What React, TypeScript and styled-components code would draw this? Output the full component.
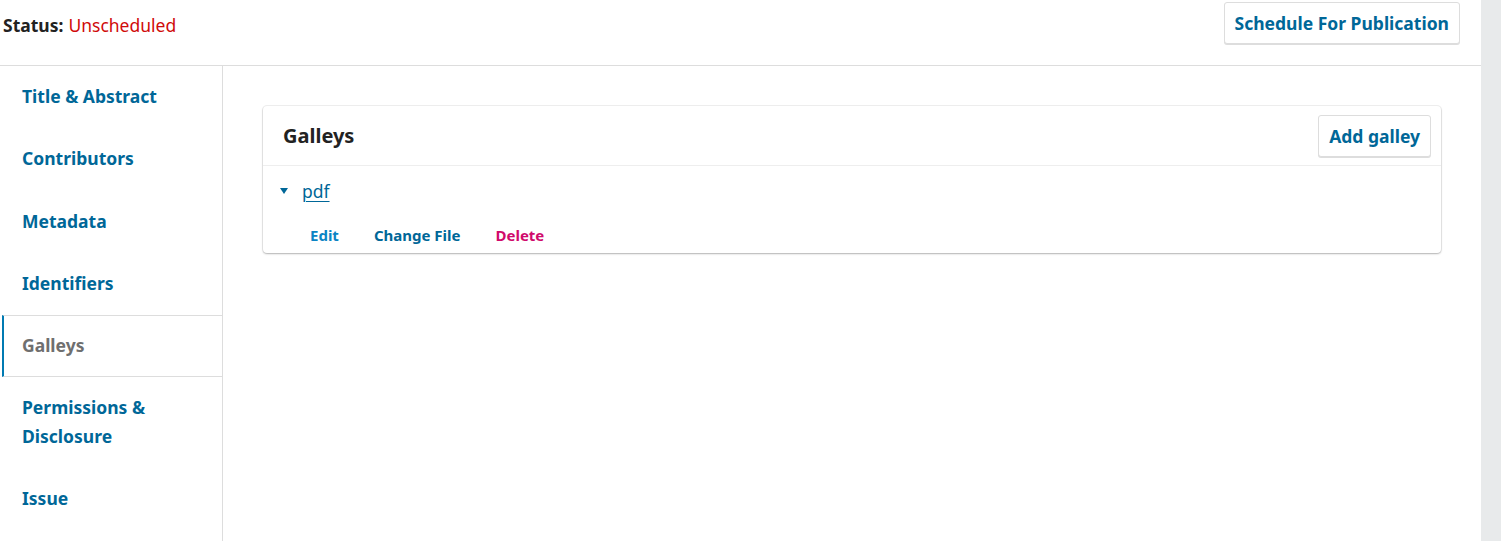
import React from "react";
import styled, { createGlobalStyle, css } from "styled-components";

const Global = createGlobalStyle`
  html, body { margin: 0; padding: 0; background: #fff; }
  body { font-family: "Noto Sans", "Open Sans", sans-serif; color: #222; }
  * { box-sizing: border-box; }
`;

const Page = styled.div`
  display: flex;
  width: 1501px;
  height: 541px;
  overflow: hidden;
`;

const Main = styled.div`
  width: 1481px;
  display: flex;
  flex-direction: column;
`;

const Scroll = styled.div`
  width: 20px;
  background: #e8eaeb;
`;

const Header = styled.div`
  height: 66px;
  display: flex;
  align-items: flex-start;
  justify-content: space-between;
  padding: 2px 21px 0 3px;
  border-bottom: 1px solid #ddd;
`;

const Status = styled.div`
  height: 46px;
  display: flex;
  align-items: center;
  font-size: 17.5px;
`;

const StatusLabel = styled.span`
  font-weight: 700;
  color: #222;
  margin-right: 5px;
`;

const StatusValue = styled.span`
  color: #d00a0a;
`;

const Button = styled.button`
  height: 42px;
  padding: 0 10px;
  background: #fff;
  border: 1px solid #ddd;
  border-radius: 3px;
  box-shadow: 0 1px 0 #ddd;
  font-family: inherit;
  font-size: 17.5px;
  font-weight: 700;
  color: #006798;
  cursor: pointer;
`;

const Body = styled.div`
  flex: 1;
  display: flex;
`;

const Side = styled.nav`
  width: 223px;
  border-right: 1px solid #ddd;
  padding-left: 2px;
`;

const NavItem = styled.div<{ $active?: boolean }>`
  padding: 16px 10px 18px 20px;
  font-size: 17.5px;
  line-height: 28.3px;
  font-weight: 700;
  color: #006798;
  ${(p) =>
    p.$active &&
    css`
      padding: 15px 10px 17px 18px;
      border-top: 1px solid #ddd;
      border-bottom: 1px solid #ddd;
      border-left: 2px solid #007ab2;
      color: #6f6f6f;
    `}
`;

const Content = styled.div`
  flex: 1;
  padding: 40px 40px;
`;

const Card = styled.div`
  background: #fff;
  border-radius: 4px;
  box-shadow: 0 0 0 1px rgba(0, 0, 0, 0.06), 0 1px 2px rgba(0, 0, 0, 0.25);
`;

const CardHeader = styled.div`
  height: 60px;
  display: flex;
  align-items: center;
  justify-content: space-between;
  padding: 0 10px 0 20px;
  border-bottom: 1px solid #eee;
`;

const CardTitle = styled.h2`
  margin: 0;
  font-size: 20px;
  font-weight: 700;
  color: #222;
`;

const Row = styled.div`
  padding: 12px 17px 0;
`;

const RowTop = styled.div`
  display: flex;
  align-items: center;
  height: 26px;
  gap: 14px;
`;

const Caret = styled.span`
  width: 0;
  height: 0;
  border-left: 4.5px solid transparent;
  border-right: 4.5px solid transparent;
  border-top: 6px solid #006798;
  margin-top: -1px;
`;

const FileLink = styled.a`
  font-size: 17.5px;
  color: #006798;
  text-decoration: underline;
  text-underline-offset: 3px;
  text-decoration-thickness: 1px;
`;

const Actions = styled.div`
  display: flex;
  gap: 21px;
  margin: 15px 0 0 23px;
  padding-bottom: 2px;
`;

const Action = styled.button<{ $tone: "light" | "dark" | "danger" }>`
  height: 32px;
  padding: 0 7px;
  background: none;
  border: none;
  font-family: inherit;
  font-size: 15px;
  font-weight: 700;
  cursor: pointer;
  color: ${(p) =>
    p.$tone === "light" ? "#0b84c4" : p.$tone === "danger" ? "#d00a6c" : "#006798"};
`;

const navItems = [
  "Title & Abstract",
  "Contributors",
  "Metadata",
  "Identifiers",
  "Galleys",
  "Permissions & Disclosure",
  "Issue",
];

export default function App() {
  return (
    <>
      <Global />
      <Page>
        <Main>
          <Header>
            <Status>
              <StatusLabel>Status:</StatusLabel>
              <StatusValue>Unscheduled</StatusValue>
            </Status>
            <Button>Schedule For Publication</Button>
          </Header>
          <Body>
            <Side>
              {navItems.map((n) => (
                <NavItem key={n} $active={n === "Galleys"}>
                  {n}
                </NavItem>
              ))}
            </Side>
            <Content>
              <Card>
                <CardHeader>
                  <CardTitle>Galleys</CardTitle>
                  <Button>Add galley</Button>
                </CardHeader>
                <Row>
                  <RowTop>
                    <Caret />
                    <FileLink href="#">pdf</FileLink>
                  </RowTop>
                  <Actions>
                    <Action $tone="light">Edit</Action>
                    <Action $tone="dark">Change File</Action>
                    <Action $tone="danger">Delete</Action>
                  </Actions>
                </Row>
              </Card>
            </Content>
          </Body>
        </Main>
        <Scroll />
      </Page>
    </>
  );
}
